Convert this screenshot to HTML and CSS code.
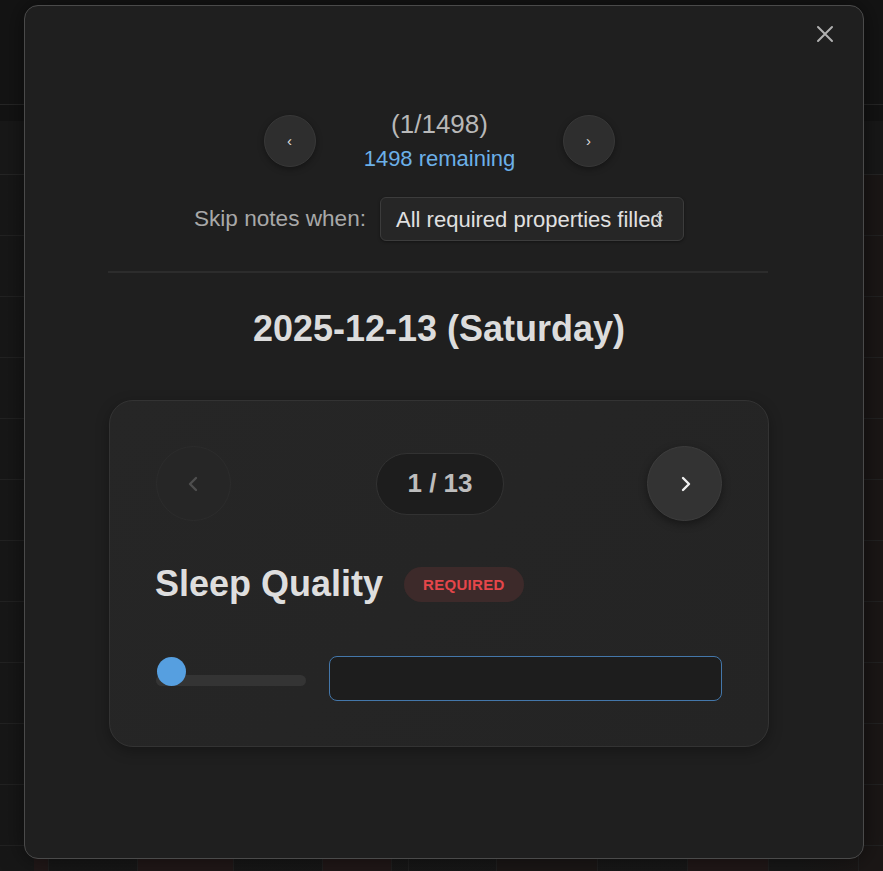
FILE: index.html
```html
<!DOCTYPE html>
<html lang="en">
<head>
    <meta charset="UTF-8">
    <meta name="viewport" content="width=device-width, initial-scale=1.0">
    <title>Daily notes review</title>
    <link rel="stylesheet" href="styles.css">
</head>
<body>
    <!-- calendar behind the modal -->
    <div class="backdrop">
        <div class="bg-header"></div>
        <div class="bg-band"></div>
        <div class="bg-row"></div>
        <div class="bg-row"></div>
        <div class="bg-row"></div>
        <div class="bg-row"></div>
        <div class="bg-row"></div>
        <div class="bg-row"></div>
        <div class="bg-row"></div>
        <div class="bg-row"></div>
        <div class="bg-row"></div>
        <div class="bg-row"></div>
        <div class="bg-row"></div>
        <div class="bg-row bg-cells">
            <span class="cell w15 tint"></span>
            <span class="cell w89"></span>
            <span class="cell w96 tint"></span>
            <span class="cell w89"></span>
            <span class="cell w69 tint"></span>
            <span class="cell w17"></span>
            <span class="cell w88"></span>
            <span class="cell w101 brown"></span>
            <span class="cell w90"></span>
            <span class="cell w81 tint"></span>
            <span class="cell w90"></span>
        </div>
    </div>

    <div class="modal">
        <button class="close-btn" aria-label="Close">
            <svg width="18" height="18" viewBox="0 0 18 18"><path d="M2 2 L16 16 M16 2 L2 16" stroke="#b0b0b0" stroke-width="2" stroke-linecap="round"/></svg>
        </button>

        <div class="queue-nav">
            <button class="round-btn">&#8249;</button>
            <div class="queue-info">
                <div class="queue-count">(1/1498)</div>
                <div class="queue-remaining">1498 remaining</div>
            </div>
            <button class="round-btn">&#8250;</button>
        </div>

        <div class="skip-row">
            <span class="skip-label">Skip notes when:</span>
            <div class="select-box">
                All required properties filled
                <svg class="select-arrow" width="8" height="14" viewBox="0 0 8 14"><path d="M1 5 L4 2 L7 5 M1 9 L4 12 L7 9" fill="none" stroke="#c8c8c8" stroke-width="1.3" stroke-linecap="round" stroke-linejoin="round"/></svg>
            </div>
        </div>

        <hr class="divider">

        <h2 class="note-date">2025-12-13 (Saturday)</h2>

        <div class="prop-card">
            <div class="card-nav">
                <button class="step-btn disabled">
                    <svg width="18" height="18" viewBox="0 0 18 18"><path d="M11 3 L5 9 L11 15" fill="none" stroke="#4e4e4e" stroke-width="2.4" stroke-linecap="round" stroke-linejoin="round"/></svg>
                </button>
                <div class="step-pill">1 / 13</div>
                <button class="step-btn">
                    <svg width="18" height="18" viewBox="0 0 18 18"><path d="M7 3 L13 9 L7 15" fill="none" stroke="#f0f0f0" stroke-width="2.4" stroke-linecap="round" stroke-linejoin="round"/></svg>
                </button>
            </div>

            <div class="prop-title-row">
                <h3 class="prop-title">Sleep Quality</h3>
                <span class="badge-required">REQUIRED</span>
            </div>

            <div class="prop-controls">
                <div class="slider">
                    <div class="slider-track"></div>
                    <div class="slider-thumb"></div>
                </div>
                <input class="prop-input" type="text">
            </div>
        </div>
    </div>
</body>
</html>
```

FILE: styles.css
```css
* { box-sizing: border-box; }

body {
    margin: 0;
    font-family: "Liberation Sans", Arial, sans-serif;
    background: #161616;
    overflow: hidden;
}

/* background calendar */
.backdrop {
    height: 871px;
    background: linear-gradient(90deg, #171717 0%, #181818 90%, #1b1716 98%);
}
.bg-header {
    height: 105px;
    border-bottom: 1px solid #262626;
    background: #141414;
}
.bg-band {
    height: 70px;
    border-bottom: 1px solid #252525;
    background: linear-gradient(#131313 0, #131313 16px, #181818 16px);
}
.bg-row {
    height: 61px;
    border-bottom: 1px solid #222;
}
.bg-cells { display: flex; padding-left: 34px; border-bottom: none; }
.cell { display: block; height: 100%; border-right: 1px solid #202020; }
.cell.tint { background: #211818; }
.cell.brown { background: #1b1716; }
.w15 { width: 15px; } .w17 { width: 17px; } .w69 { width: 69px; }
.w81 { width: 81px; } .w88 { width: 88px; } .w89 { width: 89px; }
.w90 { width: 90px; } .w96 { width: 96px; } .w101 { width: 101px; }

/* modal */
.modal {
    position: absolute;
    top: 5px;
    left: 24px;
    width: 840px;
    height: 854px;
    background: #1f1f1f;
    border: 1px solid #4a4a4a;
    border-radius: 14px;
    padding: 102px 10px 0 0;
    box-shadow: 0 0 24px rgba(0,0,0,0.5);
}
.close-btn {
    position: absolute;
    top: 14px;
    right: 18px;
    width: 40px;
    height: 28px;
    padding: 0;
    border: none;
    background: none;
    display: flex;
    align-items: center;
    justify-content: center;
}

.queue-nav {
    display: flex;
    align-items: center;
    justify-content: center;
    gap: 23px;
}
.round-btn {
    width: 52px;
    height: 52px;
    border-radius: 50%;
    background: #2e2e2e;
    border: 1px solid #383838;
    color: #ddd;
    font-size: 15px;
    font-family: "Liberation Sans", sans-serif;
    box-shadow: 0 2px 6px rgba(0,0,0,0.35);
    padding: 0 0 2px;
}
.queue-info {
    width: 200px;
    text-align: center;
    margin-left: 1px;
}
.queue-count {
    font-size: 26px;
    line-height: 32px;
    color: #b8b8b8;
}
.queue-remaining {
    margin-top: 4px;
    font-size: 22px;
    line-height: 30px;
    color: #6cb0e8;
}

.skip-row {
    display: flex;
    align-items: center;
    justify-content: center;
    gap: 14px;
    margin-top: 23px;
}
.skip-label {
    font-size: 22.6px;
    color: #a8a8a8;
}
.select-box {
    position: relative;
    width: 304px;
    height: 44px;
    padding: 8px 15px;
    font-size: 22px;
    line-height: 27px;
    color: #e0e0e0;
    background: #262626;
    border: 1px solid #3c3c3c;
    border-radius: 6px;
    white-space: nowrap;
    box-shadow: 0 1px 3px rgba(0,0,0,0.4);
}
.select-arrow {
    position: absolute;
    right: 20px;
    top: 13px;
}

.divider {
    width: 660px;
    margin: 30px auto 0 83px;
    border: none;
    border-top: 2px solid #2c2c2c;
}

.note-date {
    margin: 34px 0 0;
    text-align: center;
    font-size: 36px;
    line-height: 44px;
    font-weight: bold;
    color: #dcdcdc;
}

/* property card */
.prop-card {
    width: 660px;
    margin: 49px 0 0 84px;
    padding: 45px 46px 45px;
    border-radius: 24px;
    border: 1px solid #333;
    background: linear-gradient(135deg, #262626 0%, #242424 100%);
    box-shadow: 0 4px 14px rgba(0,0,0,0.3);
}
.card-nav {
    display: flex;
    align-items: center;
    justify-content: space-between;
}
.step-btn {
    width: 75px;
    height: 75px;
    border-radius: 50%;
    padding: 0;
    border: 1px solid #3d3d3d;
    background: #333;
    display: flex;
    align-items: center;
    justify-content: center;
    box-shadow: 0 3px 8px rgba(0,0,0,0.4);
}
.step-btn.disabled {
    background: #262626;
    border-color: #2c2c2c;
    box-shadow: none;
}
.step-pill {
    width: 128px;
    height: 62px;
    border-radius: 31px;
    background: #1d1d1d;
    border: 1px solid #323232;
    display: flex;
    align-items: center;
    justify-content: center;
    font-size: 26px;
    font-weight: bold;
    color: #bdbdbd;
    margin-left: 2px;
}

.prop-title-row {
    display: flex;
    align-items: center;
    gap: 21px;
    margin-top: 41px;
}
.prop-title {
    margin: 0;
    font-size: 36px;
    line-height: 44px;
    font-weight: bold;
    color: #dedede;
    margin-left: -1px;
}
.badge-required {
    padding: 9px 19px 9px;
    border-radius: 18px;
    background: #3d2a2a;
    color: #e5464a;
    font-size: 15px;
    font-weight: bold;
    letter-spacing: 0.3px;
    line-height: 17px;
}

.prop-controls {
    display: flex;
    align-items: center;
    gap: 23px;
    margin-top: 50px;
}
.slider {
    position: relative;
    width: 150px;
    height: 44px;
    flex-shrink: 0;
}
.slider-track {
    position: absolute;
    left: 0;
    top: 18px;
    width: 150px;
    height: 11px;
    border-radius: 6px;
    background: #343434;
}
.slider-thumb {
    position: absolute;
    left: 1px;
    top: 0;
    width: 29px;
    height: 29px;
    border-radius: 50%;
    background: #569fe0;
}
.prop-input {
    flex: 1;
    height: 45px;
    border: 1px solid #4477aa;
    border-radius: 8px;
    background: #1d1d1d;
    outline: none;
}
```
